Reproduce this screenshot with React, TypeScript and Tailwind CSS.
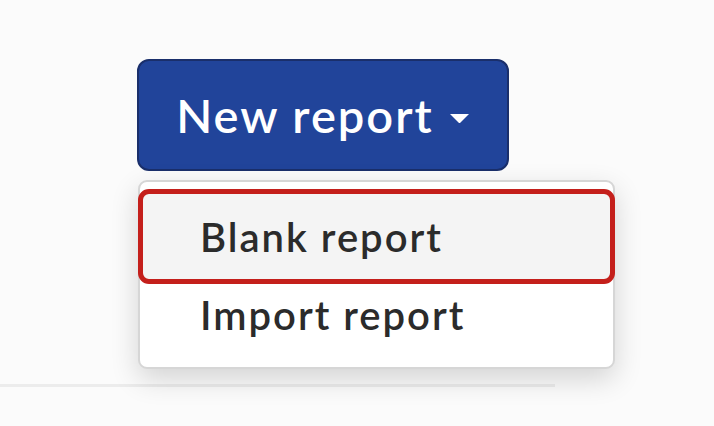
import React from "react";

const App = () => {
  return (
    <div
      className="min-h-[426px] w-full bg-[#fbfbfb] pl-[137px] pt-[59px]"
      style={{ fontFamily: "Lato, 'Open Sans', sans-serif" }}
    >
      <div className="relative w-[372px]">
        <button className="flex h-[112px] w-[372px] items-center justify-center gap-[15px] rounded-[12px] border-2 border-[#1a2f6b] bg-[#21449a] text-white">
          <span className="text-[47px] font-semibold leading-none tracking-[2px]">
            New report
          </span>
          <svg
            width="21"
            height="11"
            viewBox="0 0 21 11"
            className="mt-[6px]"
            aria-hidden="true"
          >
            <path d="M1 1 L20 1 L11.5 9.5 Q10.5 10.5 9.5 9.5 Z" fill="#fff" />
          </svg>
        </button>

        <div className="absolute left-[1px] top-[121px] z-10 h-[189px] w-[477px] rounded-[9px] border-2 border-[#d6d6d6] bg-white pt-[7px] shadow-[0_10px_28px_rgba(0,0,0,0.16)]">
          <div className="-ml-[2px] flex h-[95px] w-[477px] items-center rounded-[11px] border-[5px] border-[#c41f1b] bg-[#f4f4f4] pl-[57px] text-[40px] font-semibold tracking-[2px] text-[#2b2b2b]">
            Blank report
          </div>
          <div className="flex h-[62px] items-center pl-[60px] text-[40px] font-semibold tracking-[2px] text-[#2b2b2b]">
            Import report
          </div>
        </div>
      </div>

      <div className="-ml-[137px] mt-[213px] h-[3px] w-[555px] bg-[#ececec]" />
    </div>
  );
};

export default App;
